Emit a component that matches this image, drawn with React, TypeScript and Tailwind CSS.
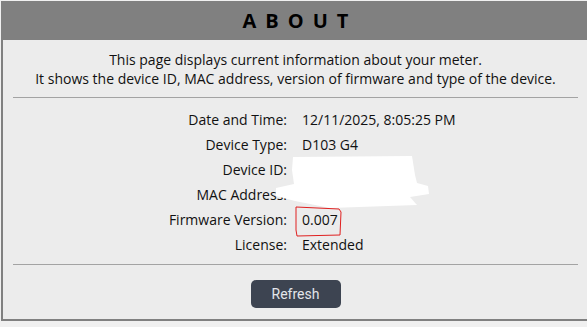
const rows: [string, string][] = [
  ['Date and Time:', '12/11/2025, 8:05:25 PM'],
  ['Device Type:', 'D103 G4'],
  ['Device ID:', ''],
  ['MAC Address:', ''],
  ['Firmware Version:', '0.007'],
  ['License:', 'Extended'],
];

export default function App() {
  return (
    <div className="min-h-[327px] bg-[#f0f0f0] pt-px pl-px font-['Open_Sans',sans-serif] text-[#111]">
      <div className="relative w-[589px] border-x-2 border-b-2 border-[#808080] bg-[#ececec]">
        <div className="-mx-[2px] h-[39px] bg-[#808080] pt-[10px] text-center">
          <h1 className="pl-[9px] text-[20px] font-bold leading-[20px] tracking-[9px] text-black">ABOUT</h1>
        </div>

        <p className="mt-[10px] text-center text-[14px] leading-[19px]">
          This page displays current information about your meter.
          <br />
          It shows the device ID, MAC address, version of firmware and type of the device.
        </p>

        <hr className="mx-[10px] mt-[9px] border-t border-[#a3a3a3]" />

        <div className="mt-[9px] grid grid-cols-[284px_1fr] gap-x-[15px] text-[14px] leading-[25px]">
          {rows.map(([label, value]) => (
            <div key={label} className="contents">
              <span className="text-right">{label}</span>
              <span>{value}</span>
            </div>
          ))}
        </div>

        <hr className="mx-[10px] mt-[7px] border-t border-[#a3a3a3]" />

        <div className="flex justify-center pt-[15px] pb-[11px]">
          <button className="h-[28px] w-[90px] rounded-[5px] bg-[#3d4451] font-['Roboto',sans-serif] text-[14px] text-[#e3e6ea]">
            Refresh
          </button>
        </div>

        {/* redaction blob + red marker drawn on top of the screenshot */}
        <svg className="pointer-events-none absolute left-[-3px] top-[-1px]" width="590" height="327">
          <polygon
            points="293,157 412,156 415,175 417,183 428,186 429,194 410,197 417,205 330,208 295,201 276,196 276,188 294,184 292,170"
            fill="#ffffff"
          />
          <path
            d="M296,207 L339,209 L341,212 L340,235 L297,236 L296,230 Z"
            fill="none"
            stroke="#e02020"
            strokeWidth="1"
          />
        </svg>
      </div>
    </div>
  );
}
